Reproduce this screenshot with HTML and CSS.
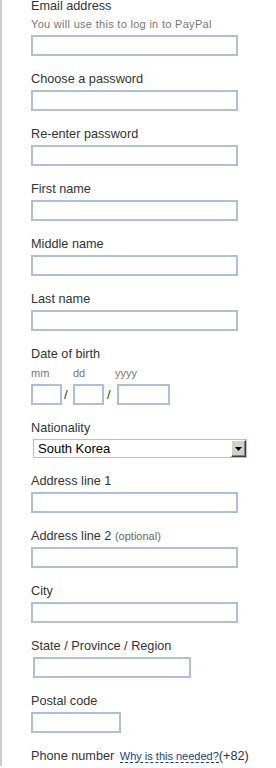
FILE: index.html
```
<!DOCTYPE html>
<html>
<head>
<meta charset="utf-8">
<link rel="stylesheet" href="styles.css">
</head>
<body>
<div class="page">
  <form class="form">
    <div class="field">
      <label class="lbl">Email address</label>
      <div class="hint">You will use this to log in to PayPal</div>
      <input class="box w-full" type="text">
    </div>
    <div class="field">
      <label class="lbl">Choose a password</label>
      <input class="box w-full" type="password">
    </div>
    <div class="field">
      <label class="lbl">Re-enter password</label>
      <input class="box w-full" type="password">
    </div>
    <div class="field">
      <label class="lbl">First name</label>
      <input class="box w-full" type="text">
    </div>
    <div class="field">
      <label class="lbl">Middle name</label>
      <input class="box w-full" type="text">
    </div>
    <div class="field">
      <label class="lbl">Last name</label>
      <input class="box w-full" type="text">
    </div>
    <div class="field">
      <label class="lbl">Date of birth</label>
      <div class="dob">
        <span class="sub">mm</span>
        <span></span>
        <span class="sub">dd</span>
        <span></span>
        <span class="sub sub-y">yyyy</span>
        <input class="box w-mm" type="text">
        <span class="sep">/</span>
        <input class="box w-dd" type="text">
        <span class="sep sep2">/</span>
        <input class="box w-yy" type="text">
      </div>
    </div>
    <div class="field">
      <label class="lbl">Nationality</label>
      <div class="select">
        <span class="select-text">South Korea</span>
        <span class="select-btn">
          <svg width="7" height="4" viewBox="0 0 7 4"><path d="M0 0H7L3.5 4Z" fill="#000"/></svg>
        </span>
      </div>
    </div>
    <div class="field">
      <label class="lbl">Address line 1</label>
      <input class="box w-full" type="text">
    </div>
    <div class="field">
      <label class="lbl">Address line 2 <span class="opt">(optional)</span></label>
      <input class="box w-full" type="text">
    </div>
    <div class="field">
      <label class="lbl">City</label>
      <input class="box w-full" type="text">
    </div>
    <div class="field">
      <label class="lbl">State / Province / Region</label>
      <input class="box w-state" type="text">
    </div>
    <div class="field">
      <label class="lbl">Postal code</label>
      <input class="box w-postal" type="text">
    </div>
    <div class="field">
      <label class="lbl">Phone number <a class="why" href="#">Why is this needed?</a>(+82)</label>
    </div>
  </form>
</div>
</body>
</html>
```
FILE: styles.css
```
html, body {
  margin: 0;
  padding: 0;
  background: #fff;
  overflow: hidden;
}
body {
  font-family: "Liberation Sans", Arial, sans-serif;
  color: #333;
}
.page {
  border-left: 2px solid #cbcbcb;
  min-height: 768px;
  box-sizing: border-box;
}
.form {
  margin: -2px 0 0 29px;
}
.field {
  margin-bottom: 15px;
}
.lbl {
  display: block;
  font-size: 12.7px;
  line-height: 16px;
  margin-bottom: 3px;
  color: #333;
}
.hint {
  font-size: 11px;
  letter-spacing: 0.3px;
  line-height: 16px;
  color: #777;
  margin-top: -1px;
  margin-bottom: 3px;
}
.opt {
  font-size: 11px;
  color: #666;
}
.box {
  display: block;
  box-sizing: border-box;
  height: 21px;
  margin: 0;
  padding: 0 3px;
  border: 2px solid #adc0d7;
  background: #fff;
  font: 13px "Liberation Sans", Arial, sans-serif;
}
.w-full { width: 207px; }
.w-state { width: 158px; margin-left: 2px; }
.w-postal { width: 90px; }
.w-mm { width: 31px; }
.w-dd { width: 31px; }
.w-yy { width: 53px; }
.dob {
  display: grid;
  grid-template-columns: 31px 11px 31px 13px 53px;
  grid-template-rows: 16px 21px;
  row-gap: 3px;
  margin-top: 1px;
}
.sub {
  font-size: 11px;
  line-height: 16px;
  color: #777;
}
.sub-y { margin-left: -2px; }
.sep {
  font-size: 13px;
  line-height: 21px;
  padding-left: 2px;
  color: #333;
}
.sep2 { padding-left: 3px; }
.select {
  display: flex;
  align-items: center;
  justify-content: space-between;
  box-sizing: border-box;
  width: 214px;
  height: 19px;
  margin-left: 2px;
  border: 1px solid #adc0d7;
  background: #fff;
}
.select-text {
  font-size: 13px;
  color: #000;
  padding-left: 4px;
  line-height: 17px;
}
.select-btn {
  box-sizing: border-box;
  width: 15px;
  height: 17px;
  background: #d4d0c8;
  border-top: 1px solid #fff;
  border-left: 1px solid #fff;
  border-right: 1px solid #404040;
  border-bottom: 1px solid #404040;
  box-shadow: inset -1px -1px 0 #808080;
  display: flex;
  align-items: center;
  justify-content: center;
}
.why {
  font-size: 11px;
  color: #1b3f7a;
  text-decoration: none;
  border-bottom: 1px dashed #1b3f7a;
  margin-left: 2px;
}
```
